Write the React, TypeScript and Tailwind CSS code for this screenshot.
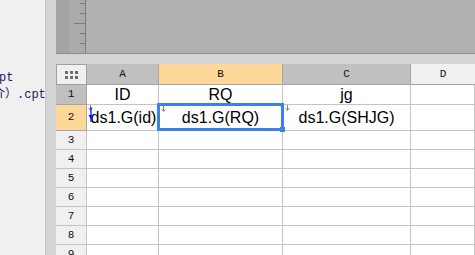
const rows = [3, 4, 5, 6, 7, 8, 9]

const Marker = ({ left }: { left: number }) => (
    <svg className={left === 1 ? "absolute left-[1px] top-[0px]" : "absolute left-[2px] top-[0px]"} width="5" height="6" viewBox="0 0 5 6">
        <path d="M2.5 0 V5 M0.5 3 L2.5 5.5 L4.5 3" stroke="#8a8a8a" strokeWidth="1" fill="none" />
    </svg>
)

const App = () => {
    const head = "font-['Liberation_Mono',monospace] text-[11px] text-[#111] flex items-center justify-center"
    const cell = "font-['Liberation_Sans',Arial,sans-serif] text-[16px] text-black flex items-center justify-center border-r border-b border-[#c4c4c4] bg-white"
    return (
        <div className="flex w-[475px] h-[255px] overflow-hidden bg-[#d4d4d4]">
            <div className="w-[46px] h-full shrink-0 bg-[#f0f0f0] border-r border-[#c9c9c9] overflow-hidden flex flex-col font-['Liberation_Mono',monospace] text-[12px] text-[#20185e] leading-none">
                <div className="h-[72px] shrink-0" />
                <div className="-ml-[1px] whitespace-nowrap">pt</div>
                <div className="h-[5px] shrink-0" />
                <div className="-ml-[7px] whitespace-nowrap font-['Liberation_Mono','Noto_Sans_CJK_SC',monospace]">介）.cpt</div>
            </div>

            <div className="flex-1 flex flex-col pl-[10px] overflow-hidden">
                <div className="h-[54px] shrink-0 flex border-b border-[#8c8c8c]">
                    <div className="w-[13px] bg-[#a4a4a4]" />
                    <div className="w-[17px] bg-[#aaaaaa] border-r border-[#7d7d7d] flex flex-col items-end">
                        <div className="h-[3px]" />
                        <div className="w-[5px] h-[1px] bg-[#7d7d7d]" />
                        <div className="h-[9px]" />
                        <div className="w-[5px] h-[1px] bg-[#7d7d7d]" />
                        <div className="h-[9px]" />
                        <div className="w-[11px] h-[1px] bg-[#7d7d7d]" />
                        <div className="h-[9px]" />
                        <div className="w-[5px] h-[1px] bg-[#7d7d7d]" />
                        <div className="h-[9px]" />
                        <div className="w-[5px] h-[1px] bg-[#7d7d7d]" />
                    </div>
                    <div className="flex-1 bg-[#b0b0b0]" />
                </div>

                <div className="h-[10px] shrink-0" />

                <div className="shrink-0 grid grid-cols-[31px_72px_124px_128px_1fr] grid-rows-[21px_20px_26px_repeat(7,19px)]">
                    <div className={`${head} bg-[#f0f0f0] border border-[#a3a290]`}>
                        <div className="grid grid-cols-3 gap-[2px]">
                            {Array.from({ length: 6 }).map((_, i) => (
                                <div key={i} className="w-[3px] h-[3px] bg-[#6c6c6c]" />
                            ))}
                        </div>
                    </div>
                    <div className={`${head} bg-[#c0c0c0] border-r border-b border-[#a6a6a6]`}>A</div>
                    <div className={`${head} bg-[#fdd898] border-r border-b border-[#a6a6a6]`}>B</div>
                    <div className={`${head} bg-[#c0c0c0] border-r border-b border-[#a6a6a6]`}>C</div>
                    <div className={`${head} bg-[#f0f0f0] border-b border-[#a6a6a6]`}>D</div>

                    <div className={`${head} bg-[#c0c0c0] border-r border-b border-[#a6a6a6]`}>1</div>
                    <div className={cell}>ID</div>
                    <div className={cell}>RQ</div>
                    <div className={cell}>jg</div>
                    <div className={cell} />

                    <div className={`${head} bg-[#fdd898] border-r border-b border-[#a6a6a6]`}>2</div>
                    <div className={`${cell} relative`}>
                        <Marker left={1} />
                        <svg className="absolute left-[1px] top-[2px]" width="6" height="16" viewBox="0 0 6 16">
                            <path d="M3 0 V15" stroke="#1010ff" strokeWidth="1.3" />
                            <path d="M0.5 8 L3 12.5 L5.5 8 Z" fill="#1010ff" />
                        </svg>
                        <span className="pl-[2px]">ds1.G(id)</span>
                    </div>
                    <div className={`${cell} relative z-10`}>
                        <div className="absolute -left-[2px] -top-[2px] w-[127px] h-[28px] border-[3px] border-[#3b82e6]" />
                        <svg className="absolute left-[2px] top-[1px]" width="5" height="6" viewBox="0 0 5 6">
                            <path d="M2.5 0 V5 M0.5 3 L2.5 5.5 L4.5 3" stroke="#8a8a8a" strokeWidth="1" fill="none" />
                        </svg>
                        <div className="absolute left-[121px] top-[22px] w-[5px] h-[5px] bg-[#3b82e6]" />
                        ds1.G(RQ)
                    </div>
                    <div className={`${cell} relative`}>
                        <Marker left={2} />
                        ds1.G(SHJG)
                    </div>
                    <div className={cell} />

                    {rows.map((r) => (
                        <div key={r} className="contents">
                            <div className={`${head} bg-[#f0f0f0] border-r border-b border-[#c4c4c4]`}>{r}</div>
                            <div className={cell} />
                            <div className={cell} />
                            <div className={cell} />
                            <div className={cell} />
                        </div>
                    ))}
                </div>
            </div>
        </div>
    )
}

export default App
